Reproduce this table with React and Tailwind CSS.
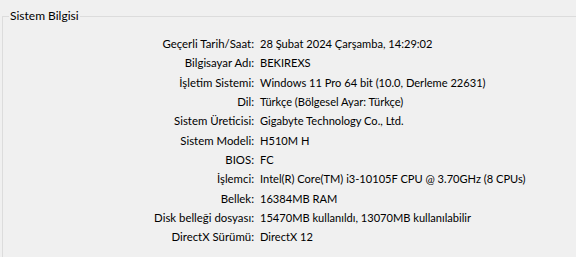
import React from 'react';

const rows = [
  ['Geçerli Tarih/Saat:', '28 Şubat 2024 Çarşamba, 14:29:02'],
  ['Bilgisayar Adı:', 'BEKIREXS'],
  ['İşletim Sistemi:', 'Windows 11 Pro 64 bit (10.0, Derleme 22631)'],
  ['Dil:', 'Türkçe (Bölgesel Ayar: Türkçe)'],
  ['Sistem Üreticisi:', 'Gigabyte Technology Co., Ltd.'],
  ['Sistem Modeli:', 'H510M H'],
  ['BIOS:', 'FC'],
  ['İşlemci:', 'Intel(R) Core(TM) i3-10105F CPU @ 3.70GHz (8 CPUs)'],
  ['Bellek:', '16384MB RAM'],
  ['Disk belleği dosyası:', '15470MB kullanıldı, 13070MB kullanılabilir'],
  ['DirectX Sürümü:', 'DirectX 12'],
];

const App = () => {
  return (
    <div className="w-[576px] h-[257px] overflow-hidden bg-[#f0f0f0] pt-[10px] pl-[2px] text-[11.4px] text-black font-['Lato',sans-serif]">
      {/* Group box */}
      <fieldset className="border-t border-l border-[#dcdcdc] h-[247px] pl-0">
        <legend className="ml-[6px] px-[1px] leading-[12px] text-[12px]">Sistem Bilgisi</legend>
        <div className="grid grid-cols-[251px_1fr] gap-x-[6px] pt-[12px]">
          {rows.map(([label, value]) => (
            <React.Fragment key={label}>
              <div className="text-right leading-[19.35px] whitespace-nowrap">{label}</div>
              <div className="leading-[19.35px] whitespace-nowrap text-[11.1px]">{value}</div>
            </React.Fragment>
          ))}
        </div>
      </fieldset>
    </div>
  );
};

export default App;
